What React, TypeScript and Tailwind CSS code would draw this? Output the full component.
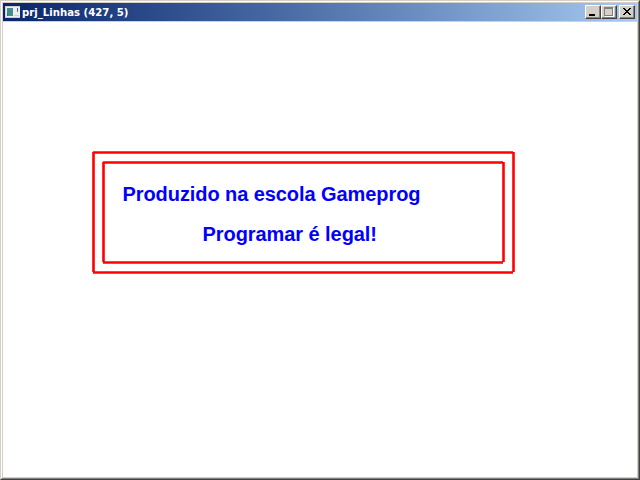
import React from "react";

const lines = [
  [93, 152.5, 513, 152.5],
  [93, 272.5, 513, 272.5],
  [93.5, 152, 93.5, 272],
  [513.5, 152, 513.5, 272],
  [103, 162.5, 503, 162.5],
  [103, 262.5, 503, 262.5],
  [103.5, 162, 103.5, 262],
  [503.5, 162, 503.5, 262],
];

function AppIcon() {
  return (
    <svg width="16" height="16" viewBox="0 0 16 16" shapeRendering="crispEdges">
      <path d="M0 2h15v12H0z" fill="#eeeeee" />
      <path d="M0 2h15v1H0zM0 3h1v11H0z" fill="#cfcfcf" />
      <path d="M2 4h6v8H2z" fill="#4d86a0" />
      <path d="M3 5h4v6H3z" fill="#3d917f" />
      <path d="M2 9h1v3H2z" fill="#3568a0" />
      <path d="M12 4h1v3h-1z" fill="#3a63a8" />
      <path d="M12 7h1v1h-1z" fill="#4c9a5a" />
      <path d="M9 11h5v1H9zM1 13h14v1H1z" fill="#cccccc" />
    </svg>
  );
}

function CaptionButton({ label, children }: { label: string; children: React.ReactNode }) {
  return (
    <button
      aria-label={label}
      className="h-[14px] w-4 border border-t-white border-l-white border-r-[#404040] border-b-[#404040] bg-[#d4d0c8] shadow-[inset_-1px_-1px_0_#808080]"
    >
      <svg width="14" height="12" viewBox="0 0 14 12" shapeRendering="crispEdges" className="block">
        {children}
      </svg>
    </button>
  );
}

export default function App() {
  return (
    <div className="h-[480px] w-[640px] border border-t-[#d4d0c8] border-l-[#d4d0c8] border-r-[#404040] border-b-[#404040]">
      <div className="h-full border border-t-white border-l-white border-r-[#808080] border-b-[#808080]">
        <div className="flex h-full flex-col border border-[#d4d0c8] bg-white">
          <header className="flex h-[18px] shrink-0 items-center bg-linear-to-r from-[#0a246a] to-[#a6caf0] pr-[2px] pl-[2px]">
            <AppIcon />
            <h1 className="ml-px text-[11px] font-bold text-white">
              <svg width="110" height="18" className="block overflow-visible">
                <text
                  x="0"
                  y="13"
                  fill="white"
                  fontFamily='"DejaVu Sans", Verdana, sans-serif'
                  textLength="106.5"
                  lengthAdjust="spacingAndGlyphs"
                >
                  prj_Linhas (427, 5)
                </text>
              </svg>
            </h1>
            <div className="ml-auto flex">
              <CaptionButton label="Minimize">
                <path d="M3 8h6v2H3z" />
              </CaptionButton>
              <CaptionButton label="Maximize">
                <path d="M3 2h9v9H3z" fill="white" />
                <path d="M2 1h9v9H2z" fill="#808080" />
                <path d="M3 3h7v6H3z" fill="#d4d0c8" />
              </CaptionButton>
              <span className="w-[2px]" />
              <CaptionButton label="Close">
                <path d="M3 2h2v1H3zM9 2h2v1H9zM4 3h2v1H4zM8 3h2v1H8zM5 4h4v1H5zM6 5h2v1H6zM5 6h4v1H5zM4 7h2v1H4zM8 7h2v1H8zM3 8h2v1H3zM9 8h2v1H9z" />
              </CaptionButton>
            </div>
          </header>
          <div className="min-h-0 flex-1 border-t border-[#d4d0c8]">
            <svg width="634" height="455" viewBox="3 22 634 455" className="block">
              <g stroke="#ff0000" strokeWidth="2.6">
                {lines.map(([x1, y1, x2, y2], i) => (
                  <line key={i} x1={x1} y1={y1} x2={x2} y2={y2} />
                ))}
              </g>
              <g
                fill="#0000ff"
                fontSize="20"
                fontWeight="700"
                fontFamily='"Liberation Sans", Arial, sans-serif'
              >
                <text x="122.5" y="201" textLength="298">Produzido na escola Gameprog</text>
                <text x="202.5" y="241" textLength="174.5">Programar é legal!</text>
              </g>
            </svg>
          </div>
        </div>
      </div>
    </div>
  );
}
